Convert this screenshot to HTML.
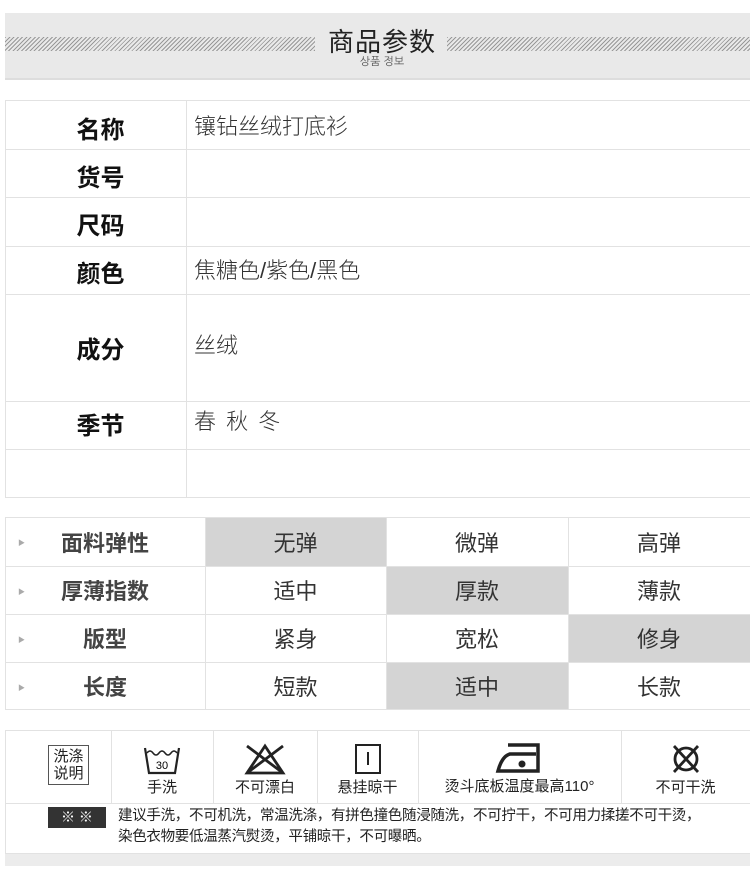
<!DOCTYPE html><html><head><meta charset="utf-8"><style>
*{margin:0;padding:0;box-sizing:border-box}
body{width:750px;height:872px;background:#fff;position:relative;overflow:hidden;font-family:"Liberation Sans","Noto Sans CJK SC",sans-serif;color:#222}
.a{position:absolute}
.lbl{position:absolute;left:10px;width:181px;text-align:center;font-weight:bold;font-size:24px;color:#111}
.val{position:absolute;left:194px;font-size:22px;color:#333;font-weight:300}
.c{position:absolute;text-align:center;font-size:22px;color:#333;line-height:48px}
.k{position:absolute;left:5px;width:200px;line-height:48px;font-weight:bold;font-size:22px;color:#444;text-align:center}
.ci{position:absolute;top:730px;height:73px;text-align:center;font-size:15px;color:#222}
</style></head><body>
<div class="a" style="left:5px;top:13px;width:745px;height:67px;background:#e9e9e9;border-bottom:2px solid #ddd"></div>
<div class="a" style="left:5px;top:37px;width:310px;height:14px;background:repeating-linear-gradient(135deg,#999 0 1px,#e9e9e9 1px 3px)"></div>
<div class="a" style="left:447px;top:37px;width:303px;height:14px;background:repeating-linear-gradient(135deg,#999 0 1px,#e9e9e9 1px 3px)"></div>
<div class="a" style="left:320px;top:22px;width:124px;text-align:center;font-size:26px;color:#222;letter-spacing:1px">商品参数</div>
<div class="a" style="left:322px;top:55px;width:120px;text-align:center;font-size:11px;color:#555;font-family:'Liberation Sans','NanumGothic',sans-serif">상품 정보</div>

<div class="a" style="left:5px;top:100px;width:745px;height:398px;border:1px solid #e2e2e2;border-right:none"></div>
<div class="a" style="left:186px;top:100px;width:1px;height:398px;background:#e2e2e2"></div>
<div class="a" style="left:5px;top:149px;width:745px;height:1px;background:#e2e2e2"></div>
<div class="a" style="left:5px;top:197px;width:745px;height:1px;background:#e2e2e2"></div>
<div class="a" style="left:5px;top:246px;width:745px;height:1px;background:#e2e2e2"></div>
<div class="a" style="left:5px;top:294px;width:745px;height:1px;background:#e2e2e2"></div>
<div class="a" style="left:5px;top:401px;width:745px;height:1px;background:#e2e2e2"></div>
<div class="a" style="left:5px;top:449px;width:745px;height:1px;background:#e2e2e2"></div>
<div class="lbl" style="top:110px">名称</div><div class="val" style="top:109px">镶钻丝绒打底衫</div>
<div class="lbl" style="top:158px">货号</div>
<div class="lbl" style="top:206px">尺码</div>
<div class="lbl" style="top:254px">颜色</div><div class="val" style="top:253px">焦糖色/紫色/黑色</div>
<div class="lbl" style="top:330px">成分</div><div class="val" style="top:328px">丝绒</div>
<div class="lbl" style="top:406px">季节</div><div class="val" style="top:404px;letter-spacing:2px">春 秋 冬</div>

<div class="a" style="left:205px;top:517px;width:181px;height:49px;background:#d4d4d4"></div>
<div class="a" style="left:386px;top:566px;width:182px;height:48px;background:#d4d4d4"></div>
<div class="a" style="left:568px;top:614px;width:182px;height:48px;background:#d4d4d4"></div>
<div class="a" style="left:386px;top:662px;width:182px;height:48px;background:#d4d4d4"></div>
<div class="a" style="left:5px;top:517px;width:745px;height:193px;border:1px solid #e2e2e2;border-right:none"></div>
<div class="a" style="left:205px;top:517px;width:1px;height:193px;background:#e2e2e2"></div>
<div class="a" style="left:386px;top:517px;width:1px;height:193px;background:#e2e2e2"></div>
<div class="a" style="left:568px;top:517px;width:1px;height:193px;background:#e2e2e2"></div>
<div class="a" style="left:5px;top:566px;width:745px;height:1px;background:#e2e2e2"></div>
<div class="a" style="left:5px;top:614px;width:745px;height:1px;background:#e2e2e2"></div>
<div class="a" style="left:5px;top:662px;width:745px;height:1px;background:#e2e2e2"></div>
<div class="a" style="left:18px;top:538px;font-size:7px;color:#aaa">▶</div>
<div class="a" style="left:18px;top:587px;font-size:7px;color:#aaa">▶</div>
<div class="a" style="left:18px;top:635px;font-size:7px;color:#aaa">▶</div>
<div class="a" style="left:18px;top:683px;font-size:7px;color:#aaa">▶</div>
<div class="k" style="top:520px">面料弹性</div>
<div class="k" style="top:568px">厚薄指数</div>
<div class="k" style="top:616px">版型</div>
<div class="k" style="top:664px">长度</div>
<div class="c" style="left:205px;width:181px;top:520px">无弹</div><div class="c" style="left:386px;width:182px;top:520px">微弹</div><div class="c" style="left:568px;width:182px;top:520px">高弹</div>
<div class="c" style="left:205px;width:181px;top:568px">适中</div><div class="c" style="left:386px;width:182px;top:568px">厚款</div><div class="c" style="left:568px;width:182px;top:568px">薄款</div>
<div class="c" style="left:205px;width:181px;top:616px">紧身</div><div class="c" style="left:386px;width:182px;top:616px">宽松</div><div class="c" style="left:568px;width:182px;top:616px">修身</div>
<div class="c" style="left:205px;width:181px;top:664px">短款</div><div class="c" style="left:386px;width:182px;top:664px">适中</div><div class="c" style="left:568px;width:182px;top:664px">长款</div>

<div class="a" style="left:5px;top:730px;width:745px;height:124px;border:1px solid #e2e2e2;border-right:none"></div>
<div class="a" style="left:5px;top:803px;width:745px;height:1px;background:#e2e2e2"></div>
<div class="a" style="left:5px;top:854px;width:745px;height:12px;background:#ececec"></div>
<div class="a" style="left:111px;top:730px;width:1px;height:73px;background:#e2e2e2"></div>
<div class="a" style="left:213px;top:730px;width:1px;height:73px;background:#e2e2e2"></div>
<div class="a" style="left:317px;top:730px;width:1px;height:73px;background:#e2e2e2"></div>
<div class="a" style="left:418px;top:730px;width:1px;height:73px;background:#e2e2e2"></div>
<div class="a" style="left:621px;top:730px;width:1px;height:73px;background:#e2e2e2"></div>
<div class="a" style="left:48px;top:745px;width:41px;height:40px;border:1px solid #555;font-size:15px;line-height:17px;text-align:center;padding-top:2px;color:#222">洗涤<br>说明</div>
<div class="ci" style="left:111px;width:102px"><svg width="40" height="32" style="margin-top:14px"><path d="M3 4 L7 29 H33 L37 4" fill="none" stroke="#222" stroke-width="2.2"/><path d="M5 9 q3 -4 6 0 q3 4 6 0 q3 -4 6 0 q3 4 6 0 q3 -4 6 0" fill="none" stroke="#222" stroke-width="1.5"/><text x="20" y="25" font-size="11" text-anchor="middle" font-family="Liberation Sans">30</text></svg><div style="margin-top:-4px">手洗</div></div>
<div class="ci" style="left:213px;width:104px"><svg width="44" height="34" style="margin-top:12px"><path d="M22 4 L40 31 H4 Z M4 4 L40 31 M40 4 L4 31" fill="none" stroke="#222" stroke-width="2.8"/></svg><div style="margin-top:-4px">不可漂白</div></div>
<div class="ci" style="left:317px;width:101px"><svg width="30" height="32" style="margin-top:13px"><rect x="3" y="2" width="24" height="28" fill="none" stroke="#222" stroke-width="2"/><path d="M15 9 V22" stroke="#222" stroke-width="2"/></svg><div style="margin-top:-3px">悬挂晾干</div></div>
<div class="ci" style="left:418px;width:203px"><svg width="52" height="34" style="margin-top:11px"><path d="M14 4 H44 V30 H4 Q8 15 16 13 H42" fill="none" stroke="#222" stroke-width="3.5"/><circle cx="28" cy="23" r="3.5" fill="#222"/></svg><div style="margin-top:-4px">烫斗底板温度最高110°</div></div>
<div class="ci" style="left:621px;width:129px"><svg width="34" height="34" style="margin-top:12px"><circle cx="17" cy="17" r="11" fill="none" stroke="#222" stroke-width="2.8"/><path d="M5 4 L29 30 M29 4 L5 30" stroke="#222" stroke-width="2.8"/></svg><div style="margin-top:-4px">不可干洗</div></div>
<div class="a" style="left:48px;top:807px;width:58px;height:21px;background:#333;color:#fff;font-size:14px;text-align:center;line-height:21px">※ ※</div>
<div class="a" style="left:118px;top:806px;font-size:14.5px;line-height:21px;color:#222;width:632px;letter-spacing:-0.3px">建议手洗，不可机洗，常温洗涤，有拼色撞色随浸随洗，不可拧干，不可用力揉搓不可干烫，<br>染色衣物要低温蒸汽熨烫，平铺晾干，不可曝晒。</div>
</body></html>
